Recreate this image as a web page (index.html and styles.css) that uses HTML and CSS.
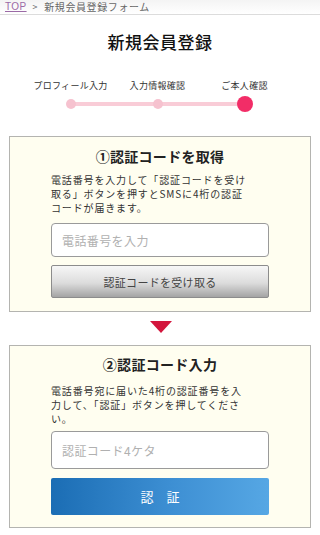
FILE: index.html
```html
<!DOCTYPE html>
<html lang="ja">
<head>
<meta charset="utf-8">
<title>新規会員登録</title>
<link rel="stylesheet" href="styles.css">
</head>
<body>
<nav class="crumbs"><a href="#" class="crumb-link">TOP</a><span class="crumb-sep">&gt;</span><span>新規会員登録フォーム</span></nav>

<h1 class="page-title">新規会員登録</h1>

<div class="steps">
  <div class="step-labels">
    <span>プロフィール入力</span>
    <span>入力情報確認</span>
    <span>ご本人確認</span>
  </div>
  <div class="step-dots">
    <span class="dot"></span>
    <span class="dot"></span>
    <span class="dot dot-active"></span>
  </div>
</div>

<section class="panel panel-one">
  <h2 class="panel-title">①認証コードを取得</h2>
  <p class="panel-text">電話番号を入力して「認証コードを受け<br>取る」ボタンを押すとSMSに4桁の認証<br>コードが届きます。</p>
  <input class="field field-one" type="tel" placeholder="電話番号を入力">
  <button class="btn btn-grey" type="button">認証コードを受け取る</button>
</section>

<div class="arrow-row"><span class="arrow"></span></div>

<section class="panel panel-two">
  <h2 class="panel-title">②認証コード入力</h2>
  <p class="panel-text">電話番号宛に届いた4桁の認証番号を入<br>力して、「認証」ボタンを押してくださ<br>い。</p>
  <input class="field field-two" type="text" placeholder="認証コード4ケタ">
  <button class="btn btn-blue" type="button">認　証</button>
</section>
</body>
</html>
```

FILE: styles.css
```css
* { box-sizing: border-box; }

body {
  margin: 0;
  background: #fff;
  color: #222;
  font-family: "Noto Sans CJK JP", "Noto Sans", sans-serif;
}

.crumbs {
  height: 15px;
  padding: 0 0 0 5px;
  border-bottom: 1px solid #dcdcdc;
  background: linear-gradient(#f4f4f4, #fff);
  font-size: 10px;
  line-height: 13px;
  color: #666;
  letter-spacing: 0.6px;
  display: flex;
  align-items: flex-start;
}

.crumb-link {
  color: #9b6aa6;
  text-decoration: underline;
  font-family: "Liberation Sans", sans-serif;
  letter-spacing: 0.4px;
}

.crumb-sep {
  margin: 0 6px 0 6px;
  font-size: 9px;
}

.page-title {
  margin: 17px 0 0;
  text-align: center;
  font-size: 17px;
  line-height: 20px;
  font-weight: 500;
  letter-spacing: 0.5px;
  color: #111;
}

.steps {
  width: 261px;
  margin: 28px 0 0 27px;
}

.step-labels {
  display: grid;
  grid-template-columns: repeat(3, 1fr);
  font-size: 9px;
  line-height: 12px;
  color: #333;
  text-align: center;
  letter-spacing: 0.3px;
}

.step-dots {
  margin-top: 4px;
  height: 16px;
  display: grid;
  grid-template-columns: repeat(3, 1fr);
  align-items: center;
  justify-items: center;
  background: linear-gradient(#f9ccd7, #f9ccd7) no-repeat 43px center / 174px 4px;
}

.dot {
  width: 10px;
  height: 10px;
  border-radius: 50%;
  background: #f6c2cf;
}

.dot-active {
  width: 16px;
  height: 16px;
  background: #f22d67;
}

.panel {
  margin: 0 9px;
  border: 1px solid #b4b4b0;
  background: #fffef0;
  padding: 0 41px;
  display: flex;
  flex-direction: column;
}

.panel-one {
  margin-top: 24px;
  padding-top: 9px;
  padding-bottom: 13px;
}

.panel-two {
  margin-top: 12px;
  padding-top: 8px;
  padding-bottom: 12px;
}

.panel-title {
  margin: 0;
  text-align: center;
  font-size: 14px;
  line-height: 20px;
  font-weight: 700;
  color: #222;
  letter-spacing: 0.3px;
}

.panel-text {
  margin: 7px 0 0;
  font-size: 10px;
  line-height: 14px;
  letter-spacing: 0.85px;
  color: #333;
  white-space: nowrap;
}

.panel-two .panel-text { margin-top: 10px; }

.field {
  display: block;
  width: 100%;
  margin-top: 8px;
  padding: 0 10px;
  border: 1px solid #9a9a9a;
  border-radius: 4px;
  background: #fff;
  font-family: "Noto Sans CJK JP", sans-serif;
  font-size: 12px;
  letter-spacing: 0.4px;
  color: #333;
}

.field::placeholder { color: #b0b0b0; }

.field-one { height: 34px; }
.field-two { height: 38px; margin-top: 5px; }

.btn {
  display: block;
  width: 100%;
  font-family: "Noto Sans CJK JP", sans-serif;
  padding: 0;
}

.btn-grey {
  height: 33px;
  margin-top: 8px;
  border: 1px solid #8c8c8c;
  border-radius: 2px;
  background: linear-gradient(#f7f7f7, #dcdcdc 55%, #a4a4a4);
  color: #444;
  font-size: 11px;
  letter-spacing: 0.3px;
}

.btn-blue {
  height: 37px;
  margin-top: 9px;
  border: none;
  border-radius: 2px;
  background: linear-gradient(90deg, #1b6db4, #3d8fd3 55%, #56a7e4);
  color: #fff;
  font-size: 13px;
}

.arrow-row {
  display: flex;
  justify-content: center;
  margin-top: 9px;
  padding-left: 1px;
}

.arrow {
  width: 0;
  height: 0;
  border-left: 11px solid transparent;
  border-right: 11px solid transparent;
  border-top: 12px solid #d3163d;
}
```
